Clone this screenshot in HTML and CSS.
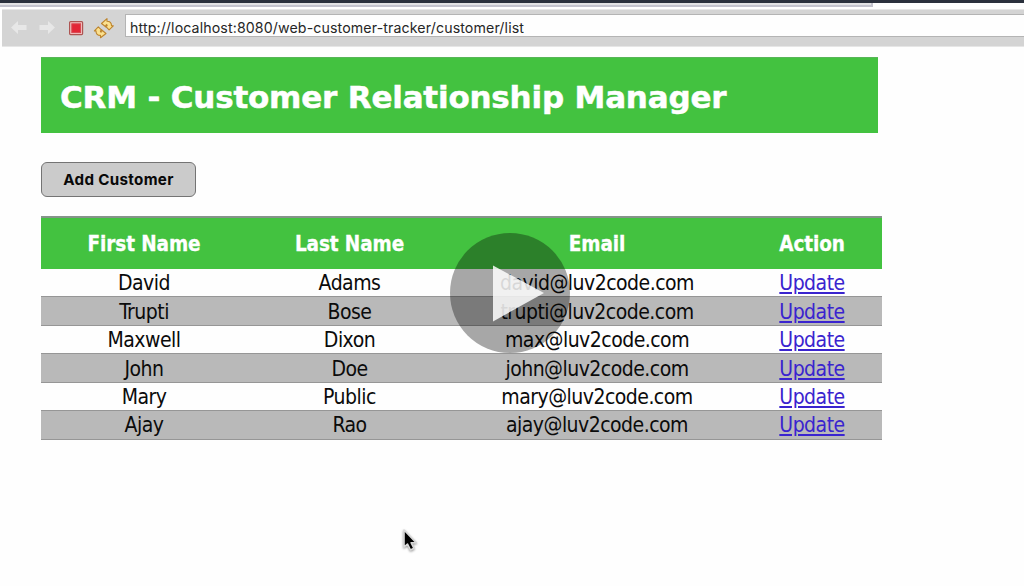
FILE: index.html
```html
<!DOCTYPE html>
<html lang="en">
<head>
<meta charset="utf-8">
<title>CRM - Customer Relationship Manager</title>
<link rel="stylesheet" href="styles.css">
</head>
<body>
<div class="window-edge"></div>
<div class="tab-edge"></div>
<header class="toolbar">
  <svg class="tools" width="122" height="37" viewBox="0 0 122 37">
    <g fill="#e7e7e7">
      <path d="M9 17.500l7-6.500v4h8.500v5H16v4z"/>
      <path d="M53 17.500l-7-6.500v4h-8.500v5H46v4z"/>
    </g>
    <rect x="67.600" y="11.600" width="13" height="13" rx="1" fill="#f6c5c5" stroke="#ad5451" stroke-width="1.200"/>
    <rect x="69.800" y="13.800" width="8.800" height="8.800" fill="#e32636" stroke="#d84850"/>
    <g fill="#fbe08e" stroke="#bd842d" stroke-width="1.100" stroke-linejoin="round">
      <path d="M99.500 13.500l5.500-4.800v2.600c3 0 4.500 1.500 4.500 4.500h1.800l-4.200 4-3.900-4h2c0-1-.2-1.300-.9-1.300v2.800z"/>
      <path d="M104 23.500l-5.500 4.200v-2.300c-3 0-4.500-1.500-4.500-4.500h-1.600l3.900-4 4.100 4h-2c0 1 .2 1.200.8 1.200v-2.600z"/>
    </g>
  </svg>
  <div class="address"><span class="url">http://localhost:8080/web-customer-tracker/customer/list</span></div>
</header>
<main class="page">
  <div class="banner"><h1 class="title">CRM - Customer Relationship Manager</h1></div>
  <button class="add">Add Customer</button>
  <table class="customers">
    <colgroup><col class="c-first"><col class="c-last"><col class="c-email"><col class="c-action"></colgroup>
    <thead><tr><th>First Name</th><th>Last Name</th><th>Email</th><th>Action</th></tr></thead>
    <tbody>
      <tr><td>David</td><td>Adams</td><td>david@luv2code.com</td><td><a href="#">Update</a></td></tr>
      <tr><td>Trupti</td><td>Bose</td><td>trupti@luv2code.com</td><td><a href="#">Update</a></td></tr>
      <tr><td>Maxwell</td><td>Dixon</td><td>max@luv2code.com</td><td><a href="#">Update</a></td></tr>
      <tr><td>John</td><td>Doe</td><td>john@luv2code.com</td><td><a href="#">Update</a></td></tr>
      <tr><td>Mary</td><td>Public</td><td>mary@luv2code.com</td><td><a href="#">Update</a></td></tr>
      <tr><td>Ajay</td><td>Rao</td><td>ajay@luv2code.com</td><td><a href="#">Update</a></td></tr>
    </tbody>
  </table>
</main>
<svg class="play" width="120" height="120" viewBox="0 0 120 120">
  <circle cx="60" cy="60" r="60" fill="#000" fill-opacity=".34"/>
  <path d="M43 32.500L94 60L43 88.500z" fill="#fff" fill-opacity=".84"/>
</svg>
<svg class="pointer" width="24" height="30" viewBox="0 0 24 30">
  <path d="M4 3v17l3.500-3 3 6 3.500-1.700-2.800-5.500h5z" fill="#000" stroke="#d9d9d9" stroke-width="1.600" stroke-linejoin="round"/>
</svg>
</body>
</html>
```
FILE: styles.css
```css
* { box-sizing: border-box; }
body { margin: 0; height: 586px; overflow: hidden; background: #fefefe; color: #0b0b0b; font-family: "DejaVu Sans", Verdana, sans-serif; }
.window-edge { height: 3px; background: #2a303c; }
.tab-edge { width: 873px; height: 4px; background: #e2e2e4; border-bottom: 2px solid #c3c3cd; border-right: 2px solid #c3c3cd; }
.toolbar { display: flex; height: 38px; margin: 2px 0 0 2px; background: #d4d4d4; border-top: 1px solid #e6e6e6; border-bottom: 1px solid #e6e6e6; }
.tools { flex: none; }
.address { flex: 1; height: 23px; margin: 4px 0 0 1px; padding-left: 4px; background: #fefefe; border: 1px solid #b4b4b4; border-right: 0; white-space: nowrap; line-height: 25px; }
.url { font-family: Inter, sans-serif; font-size: 14.200px; letter-spacing: .11px; color: #262626; }
.page { padding: 10px 0 0 41px; }
.banner { width: 837px; height: 76px; padding: 17px 0 0 19px; background: #43c240; border-top: 1px solid #58b558; }
.title { margin: 0; color: #fff; font-size: 31px; line-height: 44px; font-weight: bold; letter-spacing: -.2px; white-space: nowrap; -webkit-text-stroke: .5px #fff; }
.add { display: block; width: 155px; height: 35px; margin: 29px 0 19px; padding: 0; border: 1px solid #747474; border-radius: 6px; background: #cbcbcb; color: #080808; font: bold 15.200px/33px Inter, sans-serif; letter-spacing: .3px; }
.customers { width: 841px; table-layout: fixed; border-collapse: collapse; font-family: "DejaVu Sans Condensed", "DejaVu Sans", sans-serif; font-stretch: condensed; border-top: 2px solid #85948a; }
.c-first { width: 206px; }
.c-last { width: 205px; }
.c-email { width: 290px; }
.c-action { width: 140px; }
th { height: 51.500px; padding: 1px 0 0; background: #43c240; color: #fff; font-size: 20.500px; line-height: 24px; letter-spacing: -.1px; white-space: nowrap; -webkit-text-stroke: .3px #fff; }
td { height: 28.450px; padding: 2px 0 0; font-size: 21px; line-height: 25px; letter-spacing: -.52px; text-align: center; white-space: nowrap; border-bottom: 1.500px solid #969696; }
tbody tr:nth-child(even) { background: #b9b9b9; }
a { color: #3a24cf; text-underline-offset: 2px; text-decoration-thickness: 1.500px; }
.play { position: absolute; left: 450px; top: 233px; }
.pointer { position: absolute; left: 400px; top: 527px; filter: drop-shadow(0 1px 1px #0006); }
```
